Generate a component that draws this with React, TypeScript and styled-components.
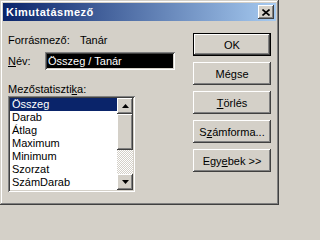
import React from 'react';
import styled, { createGlobalStyle } from 'styled-components';

const GlobalStyle = createGlobalStyle`
  html, body {
    margin: 0;
    padding: 0;
    background: #d4d0c8;
  }
  body {
    font-family: "Liberation Sans", Arial, sans-serif;
    font-size: 11px;
  }
`;

const raised = `
  box-shadow: inset -1px -1px #404040, inset 1px 1px #ffffff,
    inset -2px -2px #808080, inset 2px 2px #d4d0c8;
`;

const sunken = `
  box-shadow: inset 1px 1px #808080, inset -1px -1px #ffffff,
    inset 2px 2px #404040, inset -2px -2px #d4d0c8;
`;

const stats = ['Összeg', 'Darab', 'Átlag', 'Maximum', 'Minimum', 'Szorzat', 'SzámDarab'];

const Window = styled.div`
  width: 279px;
  height: 205px;
  box-sizing: border-box;
  padding: 3px;
  background: #d4d0c8;
  color: #000;
  box-shadow: inset -1px -1px #404040, inset 1px 1px #d4d0c8,
    inset -2px -2px #808080, inset 2px 2px #ffffff;
  display: flex;
  flex-direction: column;
`;

const TitleBar = styled.div`
  height: 18px;
  flex-shrink: 0;
  background: linear-gradient(to right, #0a246a, #a6caf0);
  display: flex;
  align-items: center;
  justify-content: space-between;
  padding: 0 2px 0 3px;
`;

const Title = styled.span`
  color: #fff;
  font-weight: bold;
  font-size: 11px;
  letter-spacing: 0.5px;
`;

const CloseBtn = styled.div`
  width: 16px;
  height: 14px;
  background: #d4d0c8;
  ${raised}
  display: flex;
  align-items: center;
  justify-content: center;
`;

const Body = styled.div`
  flex: 1;
  display: flex;
  padding: 12px 0 0 5px;
`;

const LeftCol = styled.div`
  width: 168px;
  display: flex;
  flex-direction: column;
`;

const Row = styled.div<{ $mt?: number }>`
  display: flex;
  align-items: center;
  margin-top: ${(p) => p.$mt ?? 0}px;
`;

const Label = styled.span<{ $w?: number }>`
  width: ${(p) => (p.$w ? `${p.$w}px` : 'auto')};
  line-height: 14px;
  white-space: nowrap;
`;

const NameInput = styled.div`
  width: 130px;
  height: 18px;
  box-sizing: border-box;
  padding: 2px;
  background: #fff;
  ${sunken}
`;

const Selected = styled.div`
  height: 100%;
  background: #000;
  color: #fff;
  line-height: 14px;
  padding-left: 1px;
  white-space: nowrap;
  overflow: hidden;
`;

const ListBox = styled.div`
  width: 127px;
  height: 96px;
  box-sizing: border-box;
  padding: 2px;
  background: #fff;
  ${sunken}
  display: flex;
`;

const Items = styled.div`
  flex: 1;
  display: flex;
  flex-direction: column;
`;

const Item = styled.div<{ $sel?: boolean }>`
  height: 13px;
  line-height: 13px;
  padding-left: 2px;
  background: ${(p) => (p.$sel ? '#0a246a' : 'transparent')};
  color: ${(p) => (p.$sel ? '#fff' : '#000')};
  white-space: nowrap;
`;

const ScrollBar = styled.div`
  width: 16px;
  display: flex;
  flex-direction: column;
`;

const ArrowBtn = styled.div`
  width: 16px;
  height: 16px;
  background: #d4d0c8;
  ${raised}
  display: flex;
  align-items: center;
  justify-content: center;
`;

const Thumb = styled.div`
  height: 36px;
  background: #d4d0c8;
  ${raised}
`;

const Track = styled.div`
  flex: 1;
  background-image: conic-gradient(#ffffff 25%, #d4d0c8 0 50%, #ffffff 0 75%, #d4d0c8 0);
  background-size: 2px 2px;
`;

const RightCol = styled.div`
  margin-left: 17px;
  display: flex;
  flex-direction: column;
  gap: 6px;
`;

const Button = styled.div<{ $default?: boolean }>`
  width: 78px;
  height: 23px;
  box-sizing: border-box;
  background: #d4d0c8;
  display: flex;
  align-items: center;
  justify-content: center;
  ${(p) => (p.$default ? 'border: 1px solid #000;' : '')}
  ${raised}
`;

const U = styled.span`
  text-decoration: underline;
`;

const Arrow = ({ down }: { down?: boolean }) => (
  <svg width="7" height="4" viewBox="0 0 7 4">
    <path d={down ? 'M0 0H7L3.5 4Z' : 'M0 4H7L3.5 0Z'} fill="#000" />
  </svg>
);

export default function App() {
  return (
    <>
      <GlobalStyle />
      <Window>
        <TitleBar>
          <Title>Kimutatásmező</Title>
          <CloseBtn>
            <svg width="8" height="7" viewBox="0 0 8 7">
              <path d="M0.5 0.5L7.5 6.5M7.5 0.5L0.5 6.5" stroke="#000" strokeWidth="1.6" />
            </svg>
          </CloseBtn>
        </TitleBar>
        <Body>
          <LeftCol>
            <Row>
              <Label $w={72}>Forrásmező:</Label>
              <Label>Tanár</Label>
            </Row>
            <Row $mt={5}>
              <Label $w={37}>
                <U>N</U>év:
              </Label>
              <NameInput>
                <Selected>Összeg / Tanár</Selected>
              </NameInput>
            </Row>
            <Row $mt={12}>
              <Label>
                Mezőstatiszti<U>k</U>a:
              </Label>
            </Row>
            <ListBox>
              <Items>
                {stats.map((s, i) => (
                  <Item key={s} $sel={i === 0}>
                    {s}
                  </Item>
                ))}
              </Items>
              <ScrollBar>
                <ArrowBtn>
                  <Arrow />
                </ArrowBtn>
                <Thumb />
                <Track />
                <ArrowBtn>
                  <Arrow down />
                </ArrowBtn>
              </ScrollBar>
            </ListBox>
          </LeftCol>
          <RightCol>
            <Button $default>OK</Button>
            <Button>Mégse</Button>
            <Button>
              <U>T</U>örlés
            </Button>
            <Button>
              S<U>z</U>ámforma...
            </Button>
            <Button>
              Egy<U>e</U>bek &gt;&gt;
            </Button>
          </RightCol>
        </Body>
      </Window>
    </>
  );
}
